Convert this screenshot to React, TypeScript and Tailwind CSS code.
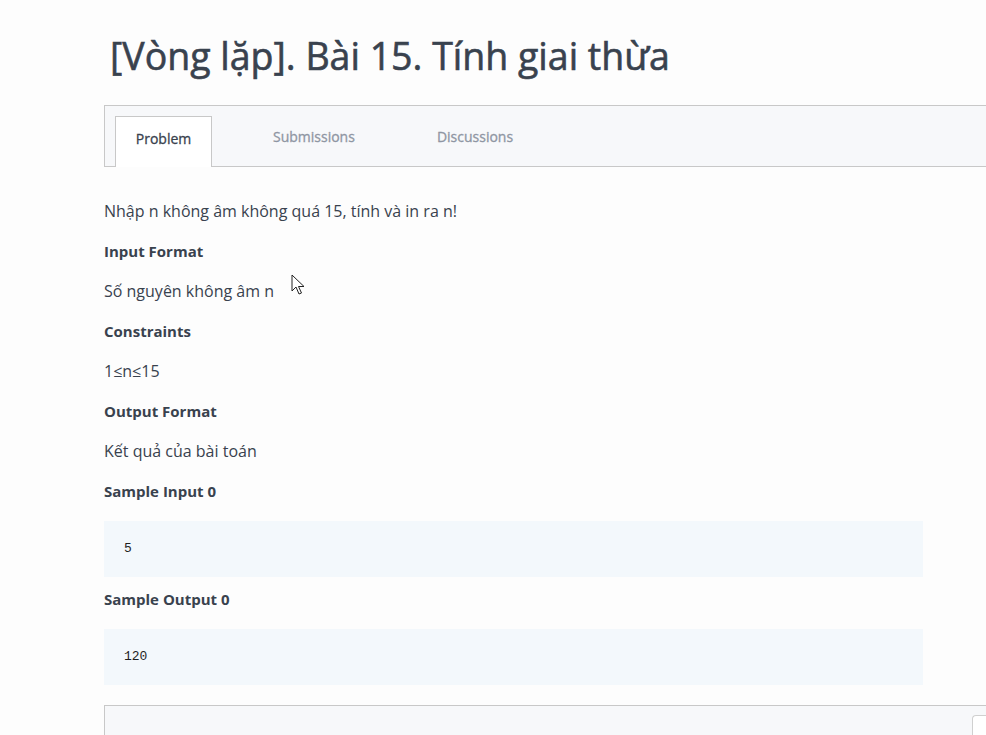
const font = { fontFamily: '"Open Sans", "Noto Sans", sans-serif' };

const Section = ({ title }: { title: string }) => (
  <div className="h-10 flex items-center font-bold text-[15px] text-[#39424e]">{title}</div>
);

const Para = ({ text }: { text: string }) => (
  <div className="h-10 flex items-center text-[16px] text-[#39424e]">{text}</div>
);

const Code = ({ text }: { text: string }) => (
  <div className="mt-[10px] mb-[2px] h-14 w-[819px] bg-[#f3f8fc] flex items-center px-5 text-[13px] text-[#1f1f1f] font-['Liberation_Mono',monospace]">
    {text}
  </div>
);

export default function App() {
  return (
    <div className="relative min-h-[735px] w-[986px] overflow-hidden bg-[#fdfdfd]" style={font}>
      <h1 className="pl-[110px] pt-[32px] text-[37.5px] leading-[48px] text-[#39424e] [-webkit-text-stroke:0.6px_#39424e]">
        [Vòng lặp]. Bài 15. Tính giai thừa
      </h1>

      <div className="ml-[104px] mt-[25px] border border-r-0 border-[#c8c8c8] bg-[#f7f8fa] h-[62px] flex items-end pl-[10px]">
        <div className="h-[51px] w-[97px] -mb-px pb-[8px] bg-white border border-b-0 border-[#c8c8c8] flex items-center justify-center text-[14px] text-[#39424e] [-webkit-text-stroke:0.3px_#39424e]">
          Problem
        </div>
        <div className="h-[51px] pb-[8px] flex items-center text-[14px] text-[#8f96a3] ml-[61px] [-webkit-text-stroke:0.3px_#8f96a3]">Submissions</div>
        <div className="h-[51px] pb-[8px] flex items-center text-[14px] text-[#8f96a3] ml-[82px] [-webkit-text-stroke:0.3px_#8f96a3]">Discussions</div>
      </div>

      <div className="pl-[104px] pt-[24px]">
        <Para text="Nhập n không âm không quá 15, tính và in ra n!" />
        <Section title="Input Format" />
        <Para text="Số nguyên không âm n" />
        <Section title="Constraints" />
        <Para text="1≤n≤15" />
        <Section title="Output Format" />
        <Para text="Kết quả của bài toán" />
        <Section title="Sample Input 0" />
        <Code text="5" />
        <Section title="Sample Output 0" />
        <Code text="120" />
        <div className="mt-[20px] h-[40px] border border-r-0 border-b-0 border-[#c8c8c8] bg-[#f7f8fa] flex justify-end pt-[9px]">
          <div className="w-[14px] h-[30px] border border-r-0 border-[#d0d0d0] rounded-tl-[4px] bg-white" />
        </div>
      </div>

      <svg className="absolute left-[291px] top-[274px]" width="14" height="22" viewBox="0 0 14 22">
        <path d="M1 1 L1 17 L5 13 L8 20 L10.5 19 L7.5 12.5 L13 12.5 Z" fill="white" stroke="#222" strokeWidth="1" strokeLinejoin="round" />
      </svg>
    </div>
  );
}
